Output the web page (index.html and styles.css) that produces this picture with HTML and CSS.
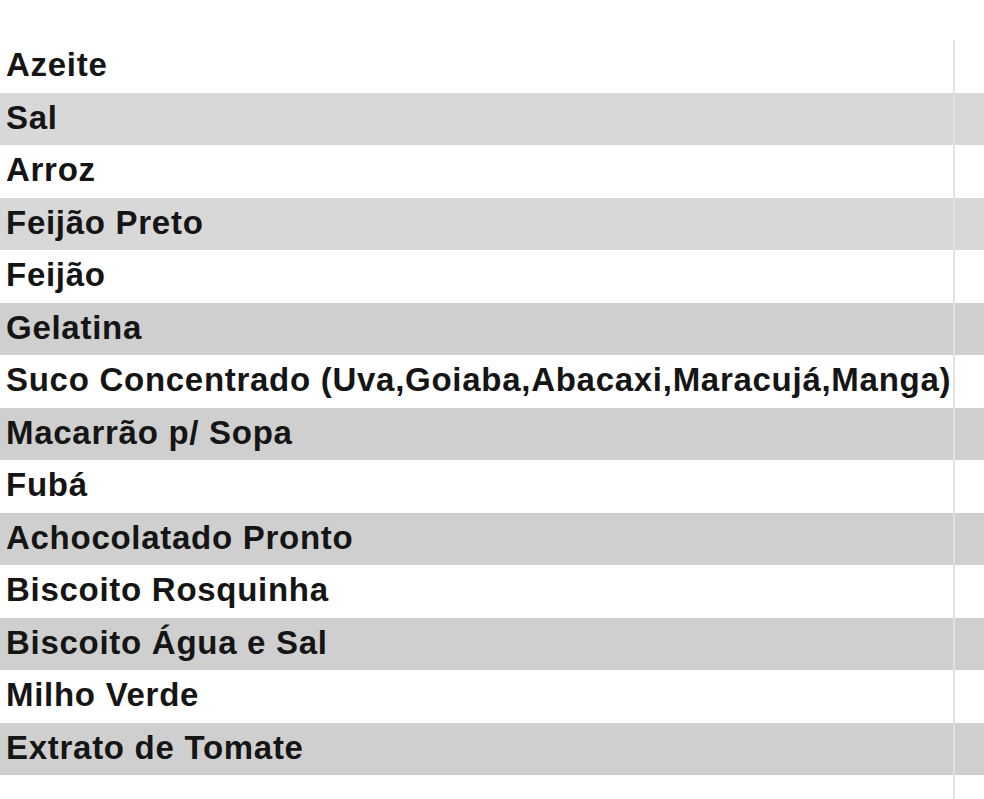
FILE: index.html
```html
<!DOCTYPE html>
<html lang="pt">
<head>
<meta charset="utf-8">
<link rel="stylesheet" href="styles.css">
</head>
<body>
<div class="sheet">
  <div class="row"><div class="cell">Azeite</div><div class="side"></div></div>
  <div class="row alt"><div class="cell">Sal</div><div class="side"></div></div>
  <div class="row"><div class="cell">Arroz</div><div class="side"></div></div>
  <div class="row alt"><div class="cell">Feijão Preto</div><div class="side"></div></div>
  <div class="row"><div class="cell">Feijão</div><div class="side"></div></div>
  <div class="row alt dark"><div class="cell">Gelatina</div><div class="side"></div></div>
  <div class="row"><div class="cell">Suco Concentrado (Uva,Goiaba,Abacaxi,Maracujá,Manga)</div><div class="side"></div></div>
  <div class="row alt dark"><div class="cell">Macarrão p/ Sopa</div><div class="side"></div></div>
  <div class="row"><div class="cell">Fubá</div><div class="side"></div></div>
  <div class="row alt dark"><div class="cell">Achocolatado Pronto</div><div class="side"></div></div>
  <div class="row"><div class="cell">Biscoito Rosquinha</div><div class="side"></div></div>
  <div class="row alt dark"><div class="cell">Biscoito Água e Sal</div><div class="side"></div></div>
  <div class="row"><div class="cell">Milho Verde</div><div class="side"></div></div>
  <div class="row alt dark"><div class="cell">Extrato de Tomate</div><div class="side"></div></div>
  <div class="row tail"><div class="cell"></div><div class="side"></div></div>
</div>
</body>
</html>
```
FILE: styles.css
```css
html, body {
  margin: 0;
  padding: 0;
  background: #ffffff;
}
.sheet {
  padding-top: 40px;
  width: 984px;
  height: 799px;
  box-sizing: border-box;
  overflow: hidden;
  font-family: "Liberation Sans", Arial, sans-serif;
  font-weight: bold;
  color: #151515;
}
.row {
  display: grid;
  grid-template-columns: 953px 1fr;
  height: 52.5px;
  background: #ffffff;
}
.row.alt {
  background: #d8d8d8;
}
.row.alt.dark {
  background: #cfcfcf;
}
.row.tail {
  height: 30px;
}
.cell {
  display: flex;
  align-items: center;
  padding-left: 6px;
  padding-bottom: 2px;
  font-size: 33px;
  white-space: nowrap;
  overflow: visible;
  letter-spacing: 0.72px;
}
.side {
  border-left: 2px solid #e2e2e2;
}
```
